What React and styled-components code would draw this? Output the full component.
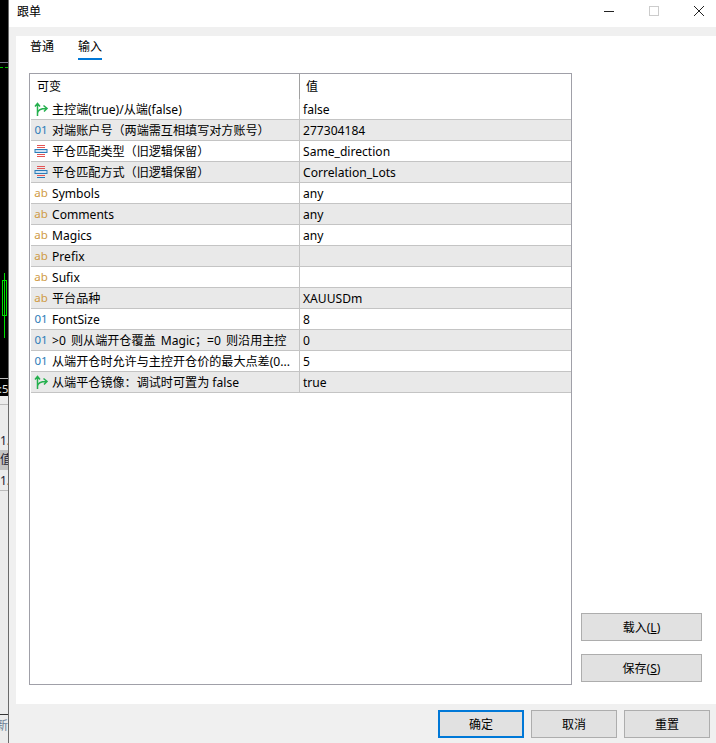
import React from 'react';
import styled, { createGlobalStyle } from 'styled-components';

const Global = createGlobalStyle`
  html, body { margin: 0; padding: 0; background: #fff; }
  body { font-family: "Liberation Sans", "Noto Sans CJK SC", sans-serif; }
`;
const FONT = `"Noto Sans", "Noto Sans CJK SC", sans-serif`;

const Page = styled.div`
  width: 716px; height: 743px; display: flex; overflow: hidden;
  font-family: ${FONT}; font-size: 12.1px; color: #000;
`;
const Strip = styled.div`
  width: 8px; flex: none; display: flex; flex-direction: column;
  border-right: 1px solid #6a6a6a; background: #ececec; overflow: hidden;
`;
const ChartArea = styled.div`
  height: 396px; background: #000; position: relative; flex: none; overflow: hidden;
`;
const GridLine = styled.div`
  position: absolute; left: 0; right: 0; top: ${p => p.$top}px; height: 1px; background: ${p => p.$c};
`;
const DashLine = styled.div`
  position: absolute; left: 0; right: 0; top: 67px; height: 1px;
  background: repeating-linear-gradient(90deg, #00c000 0 3px, transparent 3px 5px);
`;
const Candle = styled.div`
  position: absolute; left: 2px; top: 280px; width: 5px; height: 36px;
  border: 1px solid #00e000; box-sizing: border-box;
  &::before { content: ""; position: absolute; left: 1px; top: -8px; width: 1px; height: 65px; background: #00e000; }
`;
const TimeLabel = styled.div`
  position: absolute; left: -1px; top: 382px; color: #e8e8e8; font-size: 11px; line-height: 13px;
`;
const StripRow = styled.div`
  height: ${p => p.$h}px; flex: none; line-height: ${p => p.$h}px; font-size: 12px; white-space: nowrap; overflow: hidden;
  background: ${p => (p.$dark ? '#c4c4c4' : 'transparent')}; color: #223;
  ${p => p.$line && 'border-bottom: 1px solid #bbb; box-sizing: border-box;'}
`;
const StripFill = styled.div`flex: 1;`;
const StripFoot = styled.div`
  height: 28px; flex: none; border-top: 1px solid #333; color: #6b7f96; font-size: 12px; line-height: 21px;
  overflow: hidden; white-space: nowrap; text-indent: -4px;
`;
const Win = styled.div`flex: 1; min-width: 0; display: flex; flex-direction: column; background: #f0f0f0;`;
const TitleBar = styled.div`
  height: 27px; flex: none; background: #fff; display: flex; align-items: center;
  padding: 0 12px 5px 8px; box-sizing: border-box;
`;
const TitleText = styled.div`flex: 1; font-size: 12px;`;
const WinBtns = styled.div`display: flex; align-items: center; gap: 35px;`;
const WinIcon = styled.svg`display: block; width: 10px; height: 10px; flex: none;`;
const Body = styled.div`
  margin: 9px 0 0 7px; height: 668px; flex: none; background: #fff; display: flex; flex-direction: column;
`;
const Tabs = styled.div`display: flex; gap: 24px; padding-left: 14px; height: 24px; flex: none;`;
const Tab = styled.div`
  height: 24px; box-sizing: border-box; line-height: 22px; font-size: 12px;
  border-bottom: ${p => (p.$on ? '2px solid #0078d7' : '2px solid transparent')};
`;
const Main = styled.div`
  flex: 1; display: flex; padding: 13px 14px 19px 13px; gap: 9px; min-height: 0;
`;
const Table = styled.div`
  width: 543px; flex: none; border: 1px solid #a0a0a8; box-sizing: border-box;
  padding: 0 0 0 1px; background: #fff;
`;
const HeadRow = styled.div`
  display: grid; grid-template-columns: 268px 1fr; height: 25px;
`;
const HeadCell = styled.div`
  padding-left: ${p => p.$pl}px; line-height: 25px; font-size: 12px;
  ${p => p.$div && 'border-left: 1px solid #a0a0a0;'}
`;
const Row = styled.div`
  display: grid; grid-template-columns: 268px 1fr; height: 21px; box-sizing: border-box;
  background: ${p => (p.$alt ? '#e9e9e9' : '#fff')};
  border-bottom: 1px solid #c4c4c4; line-height: 22px;
`;
const NameCell = styled.div`
  display: flex; min-width: 0; white-space: nowrap; overflow: hidden; padding-left: 3px; gap: 4px;
`;
const NameText = styled.span`word-spacing: ${p => p.$ws || 0}px;`;
const ValueCell = styled.div`
  border-left: 1px solid #c4c4c4; padding-left: 3px; white-space: nowrap; overflow: hidden;
`;
const IconBox = styled.span`
  width: 14px; height: 20px; flex: none; display: flex; align-items: center; justify-content: center;
  font-size: 11.5px; line-height: 14px;
`;
const NumGlyph = styled.span`color: #2b7cb8;`;
const AbGlyph = styled.span`color: #cf9a45;`;
const Side = styled.div`
  flex: 1; display: flex; flex-direction: column; justify-content: flex-end; gap: 13px; padding-bottom: 3px;
`;
const Btn = styled.div`
  height: 28px; flex: none; background: #e1e1e1; border: ${p => (p.$def ? '2px solid #0078d7' : '1px solid #adadad')};
  box-sizing: border-box; display: flex; align-items: center; justify-content: center; font-size: 12px;
`;
const Key = styled.span`text-decoration: underline;`;
const Footer = styled.div`
  flex: 1; display: flex; justify-content: flex-end; gap: 7px; padding: 6px 6px 0 0;
  & > * { width: 86px; }
`;

const Flag = () => (
  <svg width="14" height="14" viewBox="0 0 14 14" fill="none" stroke="#25b04e" strokeWidth="1.5">
    <path d="M3.5 14V2M1 4.5L3.5 1.5 6 4.5M3.5 11C4 8 8 6.5 12 6.5M9.5 3.5L13 6.5 10 9.5" />
  </svg>
);
const Enum = ({ flip }) => (
  <svg width="14" height="14" viewBox="0 0 14 14" fill="none">
    <path d="M3 1.5h8M3 3.5h8" stroke={flip ? '#e25555' : '#e25555'} />
    <rect x="1" y="5.5" width="12" height="3" fill="#cfe3f3" stroke="#2b7cb8" />
    <path d="M3 10.5h8" stroke="#e25555" />
    <path d="M3 12.5h8" stroke={flip ? '#2b7cb8' : '#e25555'} />
  </svg>
);
const icons = {
  f: <Flag />,
  n: <NumGlyph>01</NumGlyph>,
  a: <AbGlyph>ab</AbGlyph>,
  e: <Enum />,
  g: <Enum flip />,
};

const rows = [
  ['f', '主控端(true)/从端(false)', 'false'],
  ['n', '对端账户号（两端需互相填写对方账号）', '277304184'],
  ['e', '平仓匹配类型（旧逻辑保留）', 'Same_direction'],
  ['g', '平仓匹配方式（旧逻辑保留）', 'Correlation_Lots'],
  ['a', 'Symbols', 'any'],
  ['a', 'Comments', 'any'],
  ['a', 'Magics', 'any'],
  ['a', 'Prefix', ''],
  ['a', 'Sufix', ''],
  ['a', '平台品种', 'XAUUSDm'],
  ['n', 'FontSize', '8'],
  ['n', '>0 则从端开仓覆盖 Magic；=0 则沿用主控', '0', 2],
  ['n', '从端开仓时允许与主控开仓价的最大点差(0...', '5'],
  ['f', '从端平仓镜像：调试时可置为 false', 'true'],
];

export default function App() {
  return (
    <Page>
      <Global />
      <Strip>
        <ChartArea>
          <GridLine $top={62} $c="#707080" />
          <DashLine />
          <Candle />
          <GridLine $top={378} $c="#bbb" />
          <TimeLabel>:50</TimeLabel>
        </ChartArea>
        <StripRow $h={9} $line />
        <StripRow $h={26} />
        <StripRow $h={19}>1.</StripRow>
        <StripRow $h={20} $dark>值</StripRow>
        <StripRow $h={21} $line>1.</StripRow>
        <StripFill />
        <StripFoot>新</StripFoot>
      </Strip>
      <Win>
        <TitleBar>
          <TitleText>跟单</TitleText>
          <WinBtns>
            <WinIcon viewBox="0 0 10 10"><path d="M0 5.5h10" stroke="#222" /></WinIcon>
            <WinIcon viewBox="0 0 10 10"><rect x=".5" y=".5" width="9" height="9" fill="none" stroke="#ccc" /></WinIcon>
            <WinIcon viewBox="0 0 10 10"><path d="M0 0l10 10M10 0L0 10" stroke="#222" /></WinIcon>
          </WinBtns>
        </TitleBar>
        <Body>
          <Tabs>
            <Tab>普通</Tab>
            <Tab $on>输入</Tab>
          </Tabs>
          <Main>
            <Table>
              <HeadRow>
                <HeadCell $pl={6}>可变</HeadCell>
                <HeadCell $div $pl={6}>值</HeadCell>
              </HeadRow>
              {rows.map(([k, name, val, ws], i) => (
                <Row key={i} $alt={i % 2 === 1}>
                  <NameCell><IconBox>{icons[k]}</IconBox><NameText $ws={ws}>{name}</NameText></NameCell>
                  <ValueCell>{val}</ValueCell>
                </Row>
              ))}
            </Table>
            <Side>
              <Btn>载入(<Key>L</Key>)</Btn>
              <Btn>保存(<Key>S</Key>)</Btn>
            </Side>
          </Main>
        </Body>
        <Footer>
          <Btn $def>确定</Btn>
          <Btn>取消</Btn>
          <Btn>重置</Btn>
        </Footer>
      </Win>
    </Page>
  );
}
